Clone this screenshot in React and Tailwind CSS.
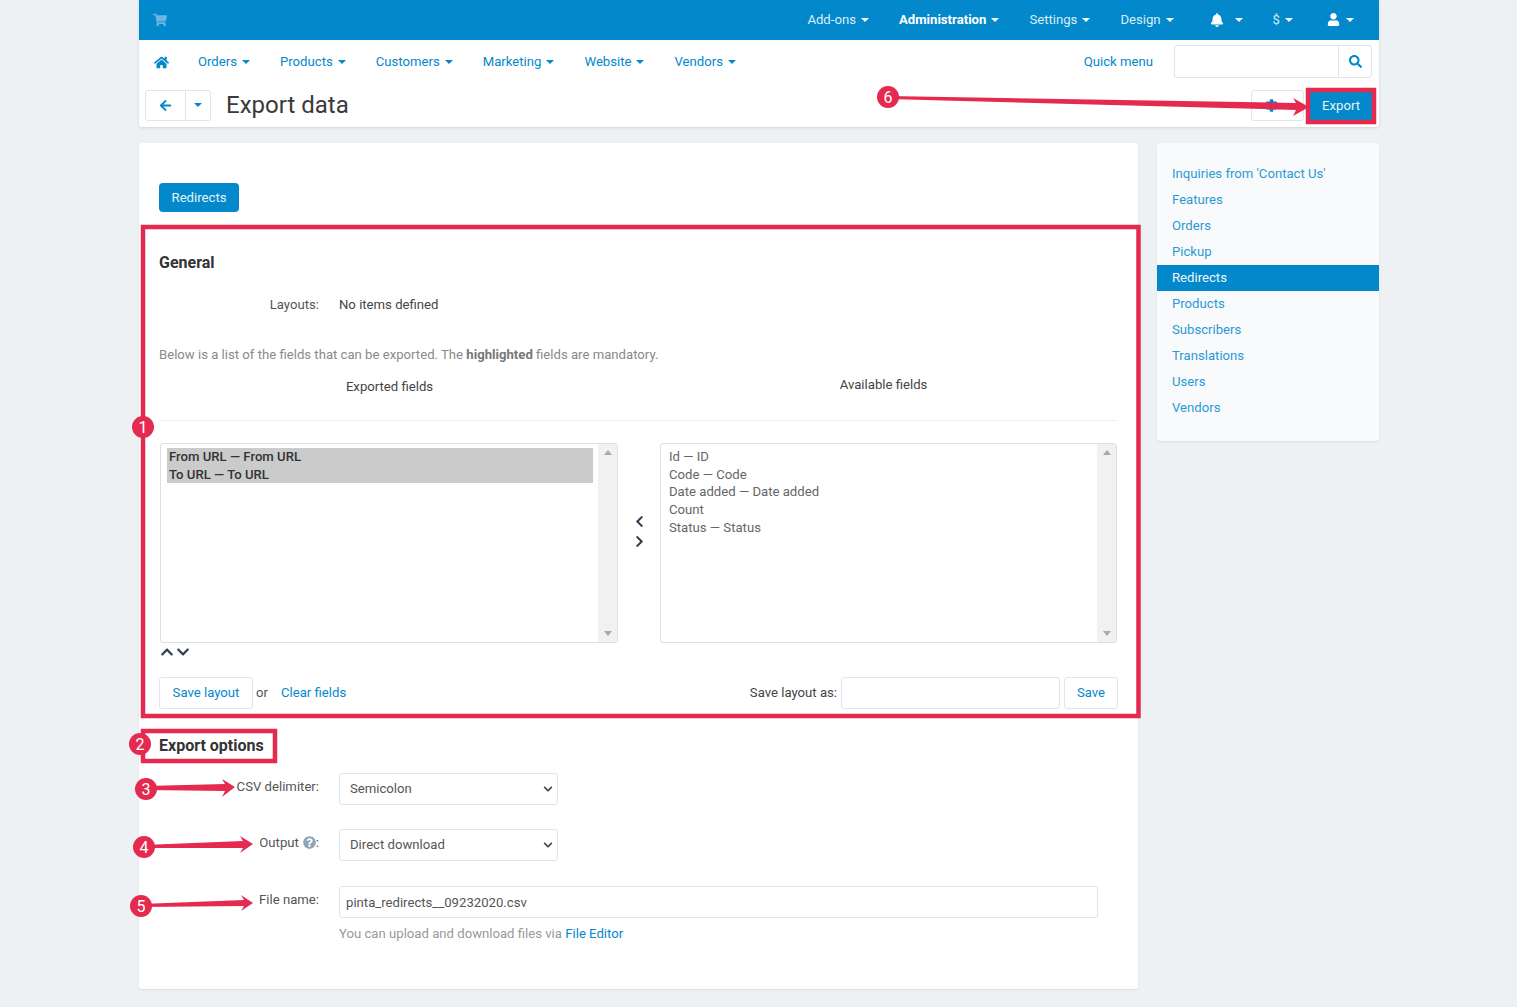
import React from 'react';
import {
  FaShoppingCart,
  FaHome,
  FaBell,
  FaUser,
  FaSearch,
  FaArrowLeft,
  FaCog,
  FaChevronUp,
  FaChevronDown,
  FaChevronLeft,
  FaChevronRight,
  FaQuestionCircle,
} from 'react-icons/fa';

const topItems = [
  { label: 'Add-ons' },
  { label: 'Administration', bold: true },
  { label: 'Settings' },
  { label: 'Design' },
];
const navItems = ['Orders', 'Products', 'Customers', 'Marketing', 'Website', 'Vendors'];
const sideItems = [
  "Inquiries from 'Contact Us'",
  'Features',
  'Orders',
  'Pickup',
  'Redirects',
  'Products',
  'Subscribers',
  'Translations',
  'Users',
  'Vendors',
];
const available = ['Id — ID', 'Code — Code', 'Date added — Date added', 'Count', 'Status — Status'];

function Caret({ className = 'border-t-white' }) {
  return <span className={`inline-block w-0 h-0 border-x-[4px] border-x-transparent border-t-[4px] ${className}`} />;
}

function ListBox({ width, children }) {
  return (
    <div className={`flex h-[200px] ${width} border border-[#d9e0e6] rounded-[3px] overflow-hidden bg-white`}>
      <div className="flex-1 min-w-0 pl-[6px] pr-[5px] pt-[4px] leading-[17.7px]">{children}</div>
      <div className="w-[19px] bg-[#f1f1f1] flex flex-col items-center justify-between py-[6px]">
        <span className="w-0 h-0 border-x-[4px] border-x-transparent border-b-[5px] border-b-[#a9a9a9]" />
        <span className="w-0 h-0 border-x-[4px] border-x-transparent border-t-[5px] border-t-[#a9a9a9]" />
      </div>
    </div>
  );
}

function OptionRow({ label, hint, children, className = '' }) {
  return (
    <div className={`flex ${className}`}>
      <div className="w-[160px] shrink-0 text-right text-[#555] pt-[4px] flex justify-end items-center self-start">
        {label}
        {hint && <FaQuestionCircle size={13} className="text-[#8fa6b8] ml-[4px]" />}
        :
      </div>
      <div className="ml-[20px]">{children}</div>
    </div>
  );
}

function Select({ value, options }) {
  return (
    <div className="relative w-[219px]">
      <select
        defaultValue={value}
        className="appearance-none w-full h-[32px] border border-[#dfe5ea] rounded-[3px] pl-[10px] text-[#555] block"
      >
        {options.map((o) => (
          <option key={o}>{o}</option>
        ))}
      </select>
      <FaChevronDown size={10} className="absolute right-[5px] top-[11px] text-[#444] pointer-events-none" />
    </div>
  );
}

function Annotations() {
  const red = '#e52a50';
  return (
    <svg className="absolute inset-0 pointer-events-none" width="1517" height="1007" viewBox="0 0 1517 1007">
      <g fill="none" stroke={red} strokeWidth="4.5">
        <rect x="143" y="227" width="995.5" height="489" />
        <rect x="143" y="731" width="132" height="30" />
        <rect x="1308" y="90" width="66" height="32" />
      </g>
      <g fill={red}>
        <polygon points="888,96 1296,103 1293,98 1309,107 1293,116 1296,110 888,99" />
        <polygon points="146,786 225,784 222,779 235,787 222,797 225,791 146,790" />
        <polygon points="144,845 243,841 240,836 253,844 240,853 243,848 144,848" />
        <polygon points="141,904 244,900 241,895 253,903 241,911 244,906 141,907" />
        <circle cx="143" cy="427" r="11" />
        <circle cx="140" cy="744" r="11" />
        <circle cx="146" cy="789" r="11" />
        <circle cx="144" cy="847" r="11" />
        <circle cx="141" cy="906" r="11" />
        <circle cx="888" cy="97" r="11" />
      </g>
      <g fill="#fff" fontSize="16" textAnchor="middle" fontFamily="Roboto, sans-serif">
        <text x="143" y="433">1</text>
        <text x="140" y="750">2</text>
        <text x="146" y="795">3</text>
        <text x="144" y="853">4</text>
        <text x="141" y="912">5</text>
        <text x="888" y="103">6</text>
      </g>
    </svg>
  );
}

export default function App() {
  return (
    <div className="relative h-[1007px] overflow-hidden bg-[#edf1f4] font-['Roboto',sans-serif] text-[13.15px] text-[#333]">
      <div className="ml-[139px] w-[1240px]">
        {/* header */}
        <div className="rounded-b-[3px] bg-white shadow-[0_1px_3px_rgba(0,0,0,0.12)] h-[127px]">
          <div className="h-[40px] bg-[#0388cc] flex items-center pl-[14px] pr-[25px] text-white">
            <FaShoppingCart size={14} className="text-[#6bb6e0]" />
            <div className="ml-auto flex items-center gap-[30px]">
              {topItems.map((item) => (
                <div key={item.label} className={`flex items-center gap-[5px] ${item.bold ? 'font-bold' : 'text-[#dcedf7]'}`}>
                  {item.label}
                  <Caret />
                </div>
              ))}
              <div className="flex items-center gap-[11px] ml-[6px]">
                <FaBell size={14} />
                <Caret />
              </div>
              <div className="flex items-center gap-[5px] text-[#dcedf7]">
                $
                <Caret />
              </div>
              <div className="flex items-center gap-[6px] ml-[4px]">
                <FaUser size={13} />
                <Caret />
              </div>
            </div>
          </div>

          <div className="h-[44px] flex items-center pl-[15px] pr-[7px] text-[#0388cc]">
            <FaHome size={15} />
            <div className="ml-[29px] flex items-center gap-[30px]">
              {navItems.map((item) => (
                <div key={item} className="flex items-center gap-[5px]">
                  {item}
                  <Caret className="border-t-[#0388cc]" />
                </div>
              ))}
            </div>
            <span className="ml-auto">Quick menu</span>
            <div className="ml-[21px] flex h-[33px] w-[198px] border border-[#dfe5ea] rounded-[3px] mb-[2px]">
              <div className="flex-1" />
              <div className="w-[33px] border-l border-[#dfe5ea] flex items-center justify-center">
                <FaSearch size={13} />
              </div>
            </div>
          </div>

          <div className="h-[43px] flex items-center pl-[6px]">
            <div className="flex h-[31px] border border-[#dfe5ea] rounded-[3px] text-[#0388cc] mb-[1px]">
              <div className="w-[40px] flex items-center justify-center border-r border-[#dfe5ea]">
                <FaArrowLeft size={13} />
              </div>
              <div className="w-[24px] flex items-center justify-center">
                <Caret className="border-t-[#0388cc]" />
              </div>
            </div>
            <h1 className="ml-[15px] text-[24px] leading-none text-[#3a3a3a] mb-[1px]">Export data</h1>
            <div className="ml-auto flex items-center pr-[7px]">
              <div className="w-[53px] h-[31px] border border-[#dfe5ea] rounded-[3px] flex items-center justify-start pl-[13px] text-[#0388cc]">
                <FaCog size={13} />
              </div>
              <div className="ml-[6px] w-[62px] h-[30px] bg-[#0388cc] text-[#e6f3fa] flex items-center justify-center rounded-[2px]">
                Export
              </div>
            </div>
          </div>
        </div>

        <div className="mt-[16px] flex items-start">
          {/* main card */}
          <div className="w-[999px] h-[846px] bg-white rounded-[3px] shadow-[0_1px_2px_rgba(0,0,0,0.08)] pt-[40px] pl-[20px]">
            <div className="w-[80px] h-[29px] bg-[#0388cc] text-[#e6f3fa] rounded-[4px] flex items-center justify-center">
              Redirects
            </div>

            <h2 className="mt-[41px] text-[16px] font-bold leading-[20px] text-[#333]">General</h2>

            <div className="mt-[22px] flex leading-[20px]">
              <div className="w-[160px] text-right text-[#555]">Layouts:</div>
              <div className="ml-[20px] text-[#444]">No items defined</div>
            </div>

            <p className="mt-[30px] leading-[20px] text-[#8a8a8a]">
              Below is a list of the fields that can be exported. The <b className="text-[#777]">highlighted</b> fields
              are mandatory.
            </p>

            <div className="mt-[8px] h-[47px] flex text-[#444] border-b border-[#edf0f2] w-[959px] box-content">
              <div className="w-[461px] text-center leading-[24px] pt-[2px]">Exported fields</div>
              <div className="ml-[31px] w-[465px] text-center leading-[24px]">Available fields</div>
            </div>

            <div className="mt-[22px] ml-[1px] flex items-center">
              <ListBox width="w-[458px]">
                <div className="bg-[#cbcbcb] text-[#333] font-medium px-[2px] h-[35px]">
                  <div>From URL — From URL</div>
                  <div>To URL — To URL</div>
                </div>
              </ListBox>
              <div className="w-[42px] mb-[24px] flex flex-col items-center gap-[7px] text-[#2d3e50]">
                <FaChevronLeft size={13} />
                <FaChevronRight size={13} />
              </div>
              <ListBox width="w-[457px]">
                <div className="pl-[2px] text-[#666]">
                  {available.map((f) => (
                    <div key={f}>{f}</div>
                  ))}
                </div>
              </ListBox>
            </div>

            <div className="mt-[3px] ml-[1px] h-[12px] flex items-center gap-[2px] text-[#2d3e50]">
              <FaChevronUp size={14} />
              <FaChevronDown size={14} />
            </div>

            <div className="mt-[19px] w-[959px] flex items-center">
              <div className="w-[94px] h-[32px] border border-[#dfe5ea] rounded-[3px] flex items-center justify-center text-[#0388cc]">
                Save layout
              </div>
              <span className="ml-[3px] text-[#555]">or</span>
              <span className="ml-[13px] text-[#0388cc]">Clear fields</span>
              <span className="ml-auto text-[#444]">Save layout as:</span>
              <div className="ml-[4px] w-[219px] h-[32px] border border-[#dfe5ea] rounded-[3px]" />
              <div className="ml-[4px] w-[54px] h-[32px] border border-[#dfe5ea] rounded-[3px] flex items-center justify-center text-[#0388cc]">
                Save
              </div>
            </div>

            <h2 className="mt-[27px] text-[16px] font-bold leading-[20px] text-[#333]">Export options</h2>

            <OptionRow className="mt-[17px]" label="CSV delimiter">
              <Select value="Semicolon" options={['Semicolon', 'Comma', 'Tab']} />
            </OptionRow>

            <OptionRow className="mt-[24px]" label="Output" hint>
              <Select value="Direct download" options={['Direct download', 'Screen', 'Server']} />
            </OptionRow>

            <OptionRow className="mt-[25px]" label="File name">
              <input
                readOnly
                value="pinta_redirects__09232020.csv"
                className="w-[759px] h-[32px] border border-[#dfe5ea] rounded-[3px] px-[6px] text-[#555] block"
              />
              <p className="mt-[6px] leading-[20px] text-[#999]">
                You can upload and download files via <span className="text-[#0388cc]">File Editor</span>
              </p>
            </OptionRow>
          </div>

          {/* sidebar */}
          <div className="ml-[19px] w-[222px] h-[298px] bg-[#f9fafb] rounded-[3px] shadow-[0_1px_2px_rgba(0,0,0,0.08)] pt-[18px]">
            {sideItems.map((item) => (
              <div
                key={item}
                className={`h-[26px] flex items-center pl-[15px] ${
                  item === 'Redirects' ? 'bg-[#0388cc] text-[#eef7fb]' : 'text-[#2a9ad6]'
                }`}
              >
                {item}
              </div>
            ))}
          </div>
        </div>
      </div>

      <Annotations />
    </div>
  );
}
